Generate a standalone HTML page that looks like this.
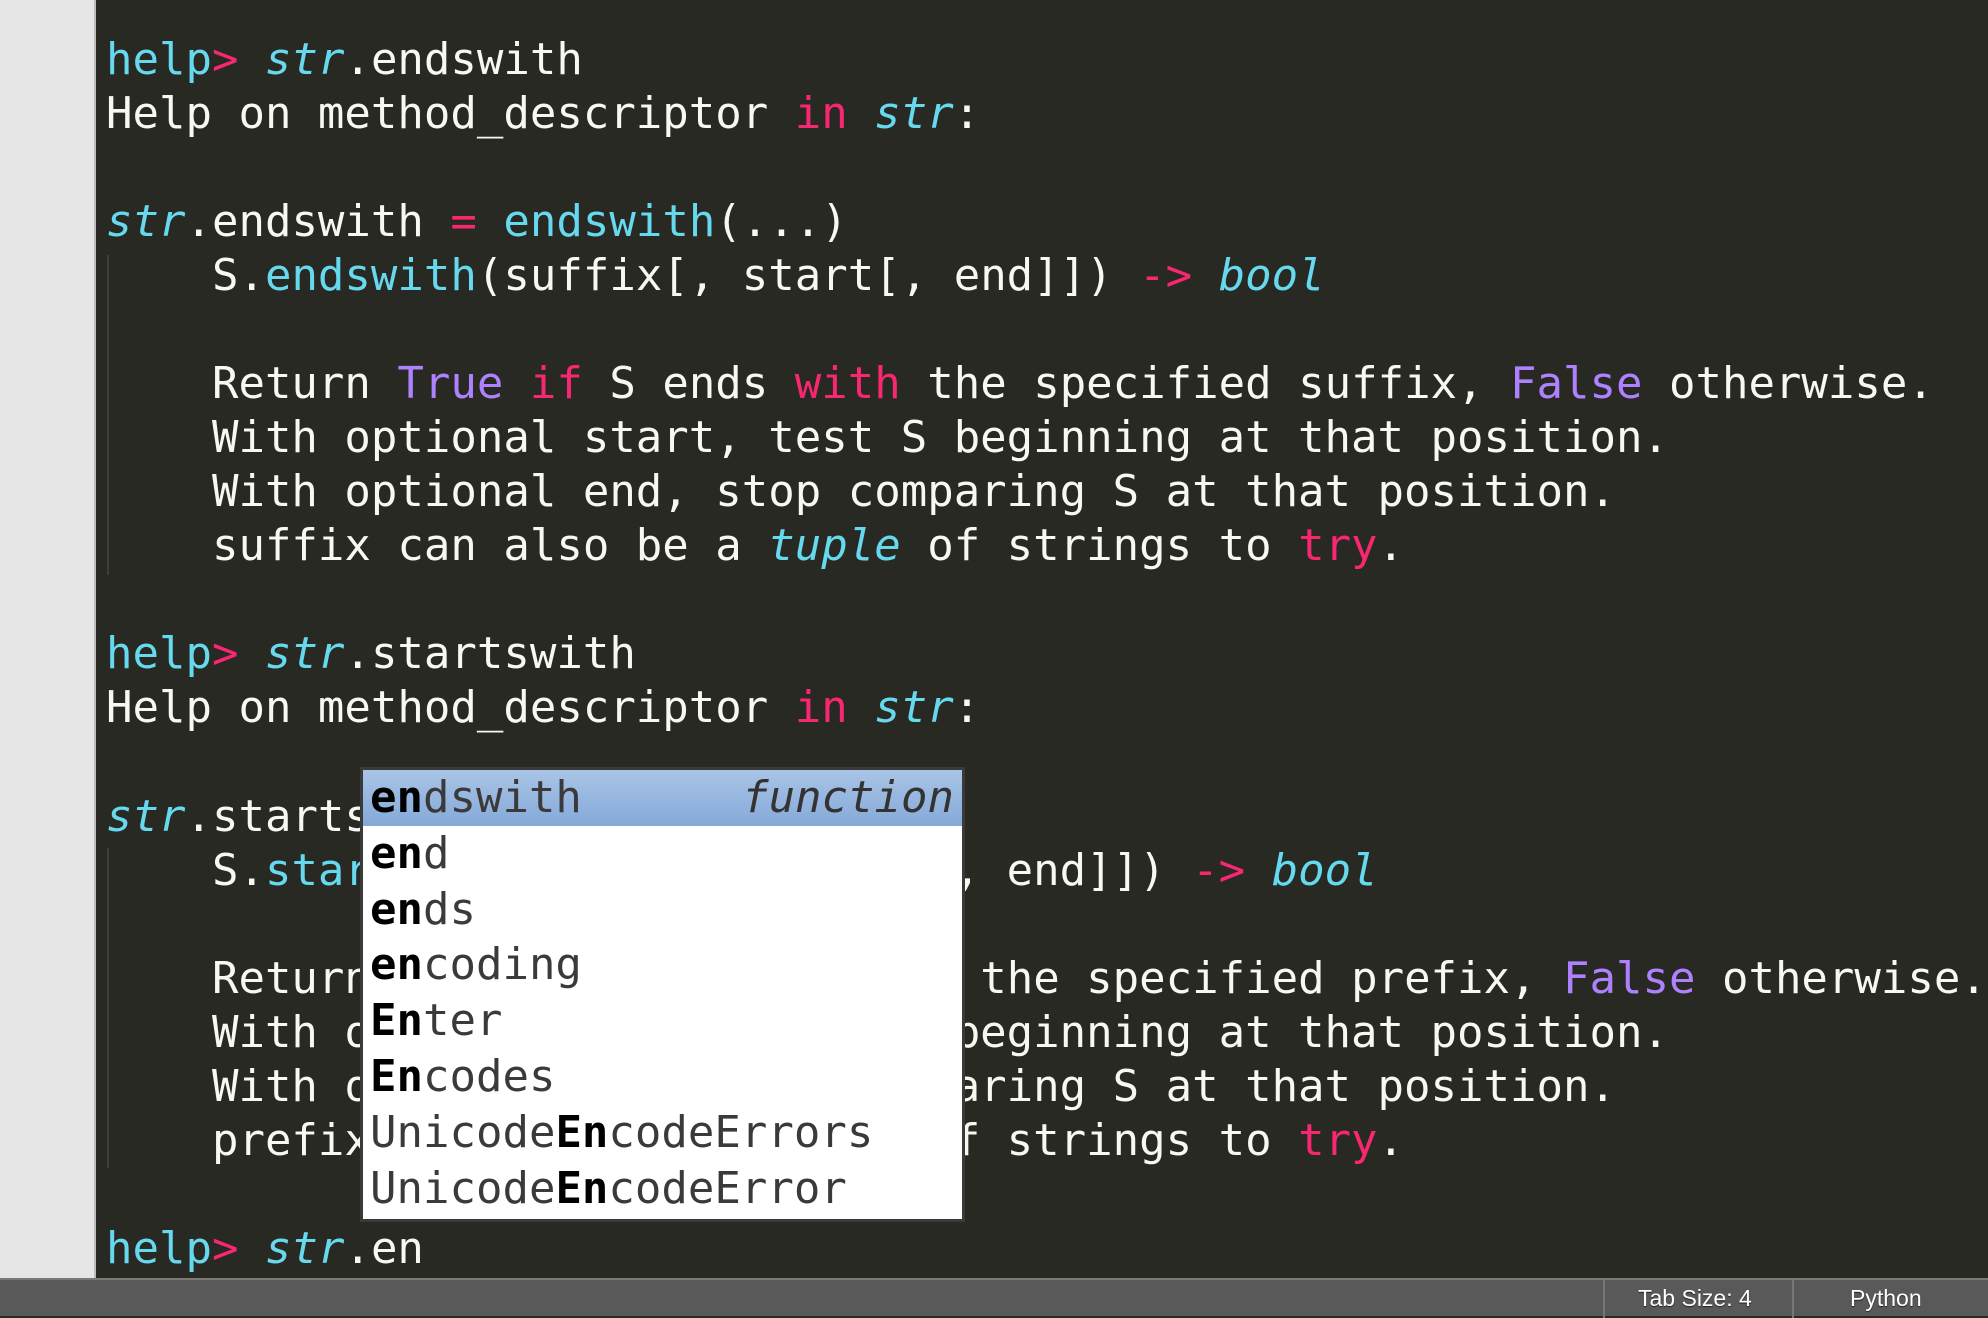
<!DOCTYPE html>
<html><head><meta charset="utf-8"><style>
html,body{margin:0;padding:0}
body{width:1988px;height:1316px;background:#292923;position:relative;overflow:hidden;font-family:"DejaVu Sans Mono","Liberation Mono",monospace}
#gut{position:absolute;left:0;top:0;width:94px;height:1278px;background:#e6e6e6;border-right:2px solid #bdbdbd}
.l{position:absolute;left:106px;font-size:44px;line-height:54px;height:54px;color:#f8f8f2;white-space:pre}
.c{color:#66d9ef}.i{font-style:italic;color:#66d9ef}.p{color:#f92672}.v{color:#ae81ff}
.g{position:absolute;left:107px;width:2px;background:#3e3d36}
#pop{position:absolute;left:360px;top:767px;width:605px;height:455px;background:#fff;border:3px solid #3a3a3a;box-sizing:border-box}
.r{height:55.8px;line-height:55.8px;font-size:44px;color:#3a3a3a;padding-left:7px;white-space:pre;position:relative}
.r b{color:#000}
.hl{background:linear-gradient(#a9c4e6,#85a9d8)}
.fn{position:absolute;right:8px;top:0;font-style:italic;color:#333}
#sb{position:absolute;left:0;top:1278px;width:1988px;height:38px;background:#595959;border-top:2px solid #7a7a73;box-sizing:border-box;font-family:"Liberation Sans",sans-serif;font-size:23px;color:#fff;text-shadow:0 1px 1px #222}
.d{position:absolute;top:0;width:2px;height:38px;background:#777}
.st{position:absolute;top:5px}
</style></head><body>
<div id="gut"></div>
<div class="g" style="top:255px;height:320px"></div>
<div class="g" style="top:848px;height:320px"></div>

<div class="l" style="top:33px"><span class="c">help</span><span class="p">&gt;</span> <span class="i">str</span>.endswith</div>
<div class="l" style="top:87px">Help on method_descriptor <span class="p">in</span> <span class="i">str</span>:</div>
<div class="l" style="top:195px"><span class="i">str</span>.endswith <span class="p">=</span> <span class="c">endswith</span>(...)</div>
<div class="l" style="top:249px">    S.<span class="c">endswith</span>(suffix[, start[, end]]) <span class="p">-&gt;</span> <span class="i">bool</span></div>
<div class="l" style="top:357px">    Return <span class="v">True</span> <span class="p">if</span> S ends <span class="p">with</span> the specified suffix, <span class="v">False</span> otherwise.</div>
<div class="l" style="top:411px">    With optional start, test S beginning at that position.</div>
<div class="l" style="top:465px">    With optional end, stop comparing S at that position.</div>
<div class="l" style="top:519px">    suffix can also be a <span class="i">tuple</span> of strings to <span class="p">try</span>.</div>
<div class="l" style="top:627px"><span class="c">help</span><span class="p">&gt;</span> <span class="i">str</span>.startswith</div>
<div class="l" style="top:681px">Help on method_descriptor <span class="p">in</span> <span class="i">str</span>:</div>
<div class="l" style="top:790px"><span class="i">str</span>.startswith <span class="p">=</span> <span class="c">startswith</span>(...)</div>
<div class="l" style="top:844px">    S.<span class="c">startswith</span>(prefix[, start[, end]]) <span class="p">-&gt;</span> <span class="i">bool</span></div>
<div class="l" style="top:952px">    Return <span class="v">True</span> <span class="p">if</span> S starts <span class="p">with</span> the specified prefix, <span class="v">False</span> otherwise.</div>
<div class="l" style="top:1006px">    With optional start, test S beginning at that position.</div>
<div class="l" style="top:1060px">    With optional end, stop comparing S at that position.</div>
<div class="l" style="top:1114px">    prefix can also be a <span class="i">tuple</span> of strings to <span class="p">try</span>.</div>
<div class="l" style="top:1222px"><span class="c">help</span><span class="p">&gt;</span> <span class="i">str</span>.en</div>

<div id="pop">
<div class="r hl"><b>en</b>dswith<span class="fn">function</span></div>
<div class="r"><b>en</b>d</div>
<div class="r"><b>en</b>ds</div>
<div class="r"><b>en</b>coding</div>
<div class="r"><b>En</b>ter</div>
<div class="r"><b>En</b>codes</div>
<div class="r">Unicode<b>En</b>codeErrors</div>
<div class="r">Unicode<b>En</b>codeError</div>
</div>

<div id="sb">
<div class="d" style="left:1603px"></div>
<div class="d" style="left:1792px"></div>
<span class="st" style="left:1638px">Tab Size: 4</span>
<span class="st" style="left:1850px">Python</span>
</div>
</body></html>
